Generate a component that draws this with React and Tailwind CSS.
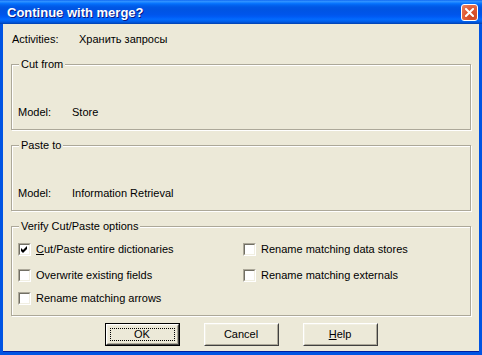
import React from 'react';

const font = "font-['Liberation_Sans',Arial,sans-serif]";

const Check = ({ checked, children }) => (
  <div className="flex items-center h-[13px]">
    <span className="w-[13px] h-[13px] shrink-0 border border-t-[#aca899] border-l-[#aca899] border-b-white border-r-white">
      <span className="flex items-center justify-center w-[11px] h-[11px] bg-white border border-t-[#716f64] border-l-[#716f64] border-b-[#f1efe2] border-r-[#f1efe2]">
        {checked && (
          <svg width="7" height="7" viewBox="0 0 7 7">
            <path d="M0 2 L2 4 L6 0 L6 3 L2 7 L0 5 Z" fill="#000" />
          </svg>
        )}
      </span>
    </span>
    <span className="ml-[5px] leading-[13px]">{children}</span>
  </div>
);

const Btn = ({ children, isDefault }) => (
  <div className={`w-[75px] h-[23px] ${isDefault ? 'border border-black' : ''}`}>
    <div className="w-full h-full border border-t-white border-l-white border-b-[#404040] border-r-[#404040]">
      <div className="w-full h-full border border-t-[#f1efe2] border-l-[#f1efe2] border-b-[#aca899] border-r-[#aca899] flex items-center justify-center p-[2px]">
        <div className={`w-full h-full flex items-center justify-center ${isDefault ? 'border border-dotted border-black' : ''}`}>
          {children}
        </div>
      </div>
    </div>
  </div>
);

const Group = ({ title, className, children }) => (
  <div className={`relative border border-[#aca899] shadow-[1px_1px_0_#fff,inset_1px_1px_0_#fff] ${className}`}>
    <span className="absolute left-[7px] -top-[7px] px-[2px] bg-[#ece9d8] leading-[13px]">{title}</span>
    {children}
  </div>
);

export default function App() {
  return (
    <div className={`w-[482px] h-[355px] flex flex-col bg-[#0054e3] text-[11px] text-black ${font}`}>
      <div className="h-[24px] shrink-0 flex items-center justify-between pl-[7px] pr-[4px] bg-[linear-gradient(to_bottom,#0058ee_0%,#3593ff_4%,#288eff_8%,#127dff_12%,#036ffc_16%,#0262ee_22%,#0057e5_30%,#0054e3_40%,#0055eb_60%,#005bf5_70%,#026afe_80%,#0062ef_88%,#0052d6_94%,#0040ab_100%)]">
        <span className="text-white font-bold text-[13px] leading-none [text-shadow:1px_1px_#0a1883]">Continue with merge?</span>
        <div className="w-[17px] h-[17px] rounded-[3px] border border-white bg-[radial-gradient(circle_at_70%_75%,#cc4621_0%,#e15a33_50%,#ec8767_100%)] flex items-center justify-center">
          <svg width="9" height="9" viewBox="0 0 9 9">
            <path d="M1 1 L8 8 M8 1 L1 8" stroke="#fff" strokeWidth="2" strokeLinecap="square" />
          </svg>
        </div>
      </div>
      <div className="flex-1 mx-[3px] mb-[4px] bg-[#ece9d8] flex flex-col px-[8px] pt-[9px] shadow-[0_1px_0_#001ea0]">
        <div className="flex h-[13px] leading-[13px] pl-[1px]">
          <span className="w-[67px]">Activities:</span>
          <span>Хранить запросы</span>
        </div>

        <Group title="Cut from" className="mt-[18px] h-[66px]">
          <div className="flex leading-[13px] pl-[6px] pt-[41px]">
            <span className="w-[54px]">Model:</span>
            <span>Store</span>
          </div>
        </Group>

        <Group title="Paste to" className="mt-[15px] h-[66px]">
          <div className="flex leading-[13px] pl-[6px] pt-[41px]">
            <span className="w-[54px]">Model:</span>
            <span>Information Retrieval</span>
          </div>
        </Group>

        <Group title="Verify Cut/Paste options" className="mt-[15px] h-[90px]">
          <div className="grid grid-cols-[225px_1fr] pl-[6px] pt-[16px] gap-y-[13px]">
            <Check checked><span className="underline">C</span>ut/Paste entire dictionaries</Check>
            <Check>Rename matching data stores</Check>
            <Check>Overwrite existing fields</Check>
            <Check>Rename matching externals</Check>
          </div>
          <div className="pl-[6px] mt-[10px]">
            <Check>Rename matching arrows</Check>
          </div>
        </Group>

        <div className="flex justify-center gap-[24px] mt-[7px]">
          <Btn isDefault>OK</Btn>
          <Btn>Cancel</Btn>
          <Btn><span><span className="underline">H</span>elp</span></Btn>
        </div>
      </div>
    </div>
  );
}
